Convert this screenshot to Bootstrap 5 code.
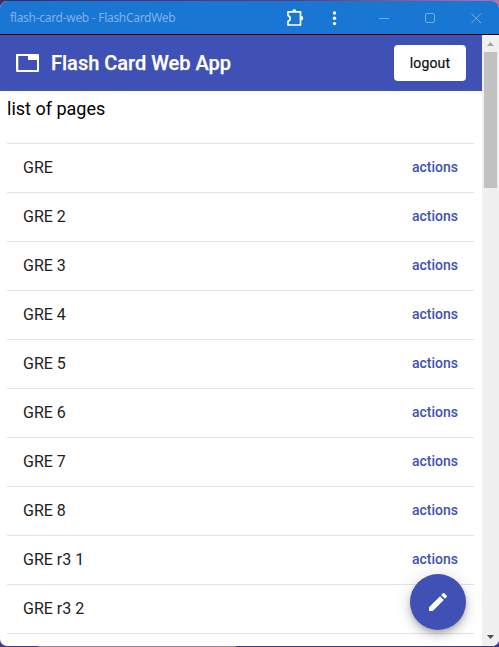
<!DOCTYPE html>
<html lang="en">
<head>
<meta charset="utf-8">
<meta name="viewport" content="width=device-width, initial-scale=1">
<title>flash-card-web - FlashCardWeb</title>
<link href="https://cdn.jsdelivr.net/npm/bootstrap@5.3.0/dist/css/bootstrap.min.css" rel="stylesheet">
<style>
  body { font-family: Roboto, "Liberation Sans", sans-serif; background: linear-gradient(90deg, #4b2460 0, #6a3a72 60%, #c868a0 100%) top / 100% 12px no-repeat, #43348f; height: 647px; padding-top: 1px; }
  svg { display: block; }
  .window-frame { height: 645px; border-radius: 7px; background: #fff; }
  .title-bar { height: 34px; flex: none; background: #1976d2; border-bottom: 1px solid #000; color: #7eb3e8; padding-left: 10px; }
  .title-text { font: 12px/16px "Noto Sans", "Open Sans", sans-serif; letter-spacing: -.29px; }
  .win-tools { gap: 27px; padding-right: 13px; }
  .page-area { width: 482px; }
  .app-bar { height: 56px; flex: none; background: #3f51b5; padding: 0 16px; }
  .app-title { font-size: 20px; line-height: 32px; font-weight: 500; margin-left: 12px; -webkit-text-stroke: .25px #fff; }
  .btn-logout { width: 72px; height: 36px; padding: 0; font-size: 14px; font-weight: 400; line-height: 34px; border: 0; border-radius: 4px; background: #fff; color: #111; letter-spacing: .15px; -webkit-text-stroke: .2px #111; }
  .page-body { padding: 0 8px 0 7px; }
  .page-heading { font-size: 18px; line-height: 24px; padding-top: 6px; margin: 0 0 22px; color: #000; }
  .page-list { border-top: 1px solid #e2e2e2; }
  .page-item { height: 49px; padding: 0 16px; border: 0; border-bottom: 1px solid #e2e2e2; color: #212121; font-size: 16px; }
  .action-link { color: #3f51b5; font-size: 14px; font-weight: 500; text-decoration: none; padding-bottom: 1px; }
  .fab-edit { left: 410px; top: 573px; width: 56px; height: 56px; padding: 16px; border: 0; background: #3f51b5; box-shadow: 0 3px 5px -1px rgba(0,0,0,.2), 0 6px 10px rgba(0,0,0,.14), 0 1px 18px rgba(0,0,0,.12); }
  .scroll-track { width: 17px; background: #f0f0f0; }
  .scroll-thumb { width: 13px; height: 136px; background: #c1c1c1; }
  .scroll-arrow { height: 17px; flex: none; }
  .desktop-edge { height: 1px; background: linear-gradient(90deg, #43348f 0 38px, #928494 38px 236px, #43348f 236px); }
</style>
</head>
<body class="overflow-hidden">
<div class="window-frame position-relative d-flex flex-column overflow-hidden">
  <header class="title-bar d-flex align-items-center justify-content-between">
    <span class="title-text">flash-card-web - FlashCardWeb</span>
    <div class="d-flex align-items-center win-tools">
      <div class="d-flex align-items-center">
        <svg width="20" height="20" viewBox="0 0 20 20" fill="none" stroke="#fff" stroke-width="1.7" stroke-linejoin="round"><path d="M3 3.8H15.5V17H3V13.2A2.9 2.9 0 0 0 3 7.6Z"/><path d="M7.3 3.2a2 2 0 0 1 4 0M16 8a2.2 2.2 0 0 1 0 4.4" fill="#fff" stroke="none"/></svg>
        <svg class="ms-4" width="14" height="20" viewBox="0 0 14 20" fill="#fff"><circle cx="5.5" cy="5" r="1.7"/><circle cx="5.5" cy="10.3" r="1.7"/><circle cx="5.5" cy="15.6" r="1.7"/></svg>
      </div>
      <svg width="116" height="20" viewBox="370 8 116 20" fill="none" stroke="#75ade4"><path d="M379 18.5H389M471.5 13.5L481 23M481 13.5L471.5 23"/><rect x="425.5" y="13.5" width="9" height="9" rx="1.2"/></svg>
    </div>
  </header>
  <div class="d-flex flex-grow-1 overflow-hidden">
    <main class="page-area overflow-hidden">
      <nav class="app-bar d-flex align-items-center text-white">
        <svg width="23" height="20" viewBox="0 0 23 20"><path fill="#fff" fill-rule="evenodd" d="M1 1H22Q23 1 23 2V18Q23 19 22 19H1Q0 19 0 18V2Q0 1 1 1ZM2.3 3V17H21V7H12V3Z"/></svg>
        <span class="app-title">Flash Card Web App</span>
        <button class="btn btn-logout ms-auto" type="button">logout</button>
      </nav>
      <div class="page-body">
        <h1 class="page-heading fw-normal">list of pages</h1>
        <ul class="page-list list-unstyled mb-0">
          <li class="page-item d-flex align-items-center justify-content-between">GRE<a class="action-link" href="#">actions</a></li>
          <li class="page-item d-flex align-items-center justify-content-between">GRE 2<a class="action-link" href="#">actions</a></li>
          <li class="page-item d-flex align-items-center justify-content-between">GRE 3<a class="action-link" href="#">actions</a></li>
          <li class="page-item d-flex align-items-center justify-content-between">GRE 4<a class="action-link" href="#">actions</a></li>
          <li class="page-item d-flex align-items-center justify-content-between">GRE 5<a class="action-link" href="#">actions</a></li>
          <li class="page-item d-flex align-items-center justify-content-between">GRE 6<a class="action-link" href="#">actions</a></li>
          <li class="page-item d-flex align-items-center justify-content-between">GRE 7<a class="action-link" href="#">actions</a></li>
          <li class="page-item d-flex align-items-center justify-content-between">GRE 8<a class="action-link" href="#">actions</a></li>
          <li class="page-item d-flex align-items-center justify-content-between">GRE r3 1<a class="action-link" href="#">actions</a></li>
          <li class="page-item d-flex align-items-center justify-content-between">GRE r3 2</li>
        </ul>
      </div>
    </main>
    <aside class="scroll-track d-flex flex-column align-items-center">
      <svg class="scroll-arrow" width="17" height="17"><path d="M5 11L8.5 7L12 11Z" fill="#a3a3a3"/></svg>
      <div class="scroll-thumb"></div>
      <svg class="scroll-arrow mt-auto" width="17" height="17"><path d="M5 6L8.5 10L12 6Z" fill="#505050"/></svg>
    </aside>
  </div>
  <button class="btn fab-edit position-absolute rounded-circle" type="button" aria-label="edit">
    <svg width="24" height="24" viewBox="0 0 24 24" fill="#fff"><path d="M3 17.25V21h3.75L17.81 9.94l-3.75-3.75L3 17.25zM20.71 7.04a1 1 0 0 0 0-1.41l-2.34-2.34a1 1 0 0 0-1.41 0l-1.83 1.83 3.75 3.75 1.83-1.83z"/></svg>
  </button>
</div>
<div class="desktop-edge"></div>
</body>
</html>
